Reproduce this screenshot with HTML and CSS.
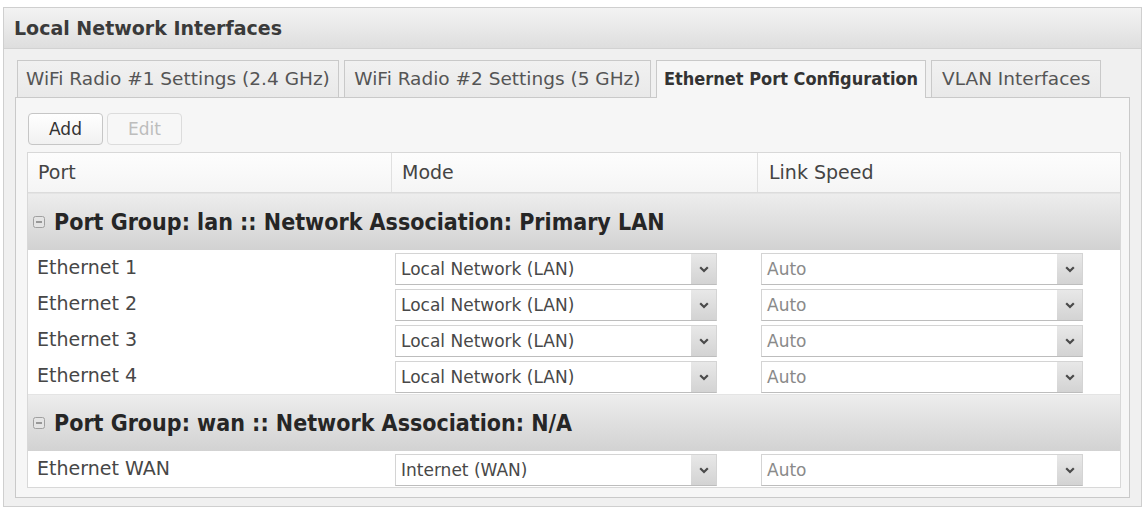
FILE: index.html
```html
<!DOCTYPE html>
<html>
<head>
<meta charset="utf-8">
<link rel="stylesheet" href="styles.css">
</head>
<body>
<div class="panel">
  <div class="panel-title">Local Network Interfaces</div>
  <div class="panel-body">
    <div class="tabs">
      <div class="tab t1">WiFi Radio #1 Settings (2.4 GHz)</div>
      <div class="tab t2">WiFi Radio #2 Settings (5 GHz)</div>
      <div class="tab t3 active">Ethernet Port Configuration</div>
      <div class="tab t4">VLAN Interfaces</div>
    </div>
    <div class="tab-content">
      <div class="toolbar">
        <button class="btn">Add</button>
        <button class="btn disabled">Edit</button>
      </div>
      <div class="grid">
        <div class="grid-head">
          <div class="hcell">Port</div>
          <div class="hcell">Mode</div>
          <div class="hcell last">Link Speed</div>
        </div>

        <div class="group">
          <svg class="collapse" width="12" height="12" viewBox="0 0 12 12"><rect x="0.5" y="0.5" width="11" height="11" rx="2" fill="#e4e4e4" stroke="#a0a0a0"/><path d="M3 6H9" stroke="#777" stroke-width="1.4"/></svg>
          <span>Port Group: lan :: Network Association: Primary LAN</span>
        </div>

        <div class="row">
          <div class="cell name">Ethernet 1</div>
          <div class="cell"><div class="select"><span class="val">Local Network (LAN)</span><span class="arrow"><svg width="10" height="7" viewBox="0 0 10 7"><path d="M1.2 1.2L5 5L8.8 1.2" fill="none" stroke="#4a4a4a" stroke-width="2.2"/></svg></span></div></div>
          <div class="cell"><div class="select"><span class="val light">Auto</span><span class="arrow"><svg width="10" height="7" viewBox="0 0 10 7"><path d="M1.2 1.2L5 5L8.8 1.2" fill="none" stroke="#4a4a4a" stroke-width="2.2"/></svg></span></div></div>
        </div>
        <div class="row">
          <div class="cell name">Ethernet 2</div>
          <div class="cell"><div class="select"><span class="val">Local Network (LAN)</span><span class="arrow"><svg width="10" height="7" viewBox="0 0 10 7"><path d="M1.2 1.2L5 5L8.8 1.2" fill="none" stroke="#4a4a4a" stroke-width="2.2"/></svg></span></div></div>
          <div class="cell"><div class="select"><span class="val light">Auto</span><span class="arrow"><svg width="10" height="7" viewBox="0 0 10 7"><path d="M1.2 1.2L5 5L8.8 1.2" fill="none" stroke="#4a4a4a" stroke-width="2.2"/></svg></span></div></div>
        </div>
        <div class="row">
          <div class="cell name">Ethernet 3</div>
          <div class="cell"><div class="select"><span class="val">Local Network (LAN)</span><span class="arrow"><svg width="10" height="7" viewBox="0 0 10 7"><path d="M1.2 1.2L5 5L8.8 1.2" fill="none" stroke="#4a4a4a" stroke-width="2.2"/></svg></span></div></div>
          <div class="cell"><div class="select"><span class="val light">Auto</span><span class="arrow"><svg width="10" height="7" viewBox="0 0 10 7"><path d="M1.2 1.2L5 5L8.8 1.2" fill="none" stroke="#4a4a4a" stroke-width="2.2"/></svg></span></div></div>
        </div>
        <div class="row">
          <div class="cell name">Ethernet 4</div>
          <div class="cell"><div class="select"><span class="val">Local Network (LAN)</span><span class="arrow"><svg width="10" height="7" viewBox="0 0 10 7"><path d="M1.2 1.2L5 5L8.8 1.2" fill="none" stroke="#4a4a4a" stroke-width="2.2"/></svg></span></div></div>
          <div class="cell"><div class="select"><span class="val light">Auto</span><span class="arrow"><svg width="10" height="7" viewBox="0 0 10 7"><path d="M1.2 1.2L5 5L8.8 1.2" fill="none" stroke="#4a4a4a" stroke-width="2.2"/></svg></span></div></div>
        </div>

        <div class="group">
          <svg class="collapse" width="12" height="12" viewBox="0 0 12 12"><rect x="0.5" y="0.5" width="11" height="11" rx="2" fill="#e4e4e4" stroke="#a0a0a0"/><path d="M3 6H9" stroke="#777" stroke-width="1.4"/></svg>
          <span>Port Group: wan :: Network Association: N/A</span>
        </div>

        <div class="row">
          <div class="cell name">Ethernet WAN</div>
          <div class="cell"><div class="select"><span class="val">Internet (WAN)</span><span class="arrow"><svg width="10" height="7" viewBox="0 0 10 7"><path d="M1.2 1.2L5 5L8.8 1.2" fill="none" stroke="#4a4a4a" stroke-width="2.2"/></svg></span></div></div>
          <div class="cell"><div class="select"><span class="val light">Auto</span><span class="arrow"><svg width="10" height="7" viewBox="0 0 10 7"><path d="M1.2 1.2L5 5L8.8 1.2" fill="none" stroke="#4a4a4a" stroke-width="2.2"/></svg></span></div></div>
        </div>
      </div>
    </div>
  </div>
</div>
</body>
</html>
```

FILE: styles.css
```css
* { box-sizing: border-box; }

body {
  margin: 0;
  background: #ffffff;
  font-family: "DejaVu Sans", "Liberation Sans", sans-serif;
  color: #444;
}

.panel {
  margin: 7px 0 0 3px;
  width: 1139px;
  height: 500px;
  border: 1px solid #cfcfcf;
  background: #f0f0f0;
  display: flex;
  flex-direction: column;
}

.panel-title {
  height: 41px;
  padding-left: 10px;
  line-height: 41px;
  font-size: 19px;
  font-weight: bold;
  color: #3a3a3a;
  background: linear-gradient(#f3f3f3, #dedede);
  border-bottom: 1px solid #d2d2d2;
}

.panel-body {
  flex: 1;
  padding: 11px 11px 8px 11px;
  display: flex;
  flex-direction: column;
}

.tabs {
  display: flex;
  gap: 5px;
  padding-left: 2px;
  height: 37px;
  position: relative;
  z-index: 1;
}

.tab {
  height: 37px;
  border: 1px solid #c9c9c9;
  border-bottom: none;
  background: linear-gradient(#f1f1f1, #e9e9e9);
  padding: 0 8px;
  line-height: 36px;
  font-size: 18.5px;
  color: #555;
  white-space: nowrap;
}

.tab.t2 { padding: 0 9.5px; }
.tab.t4 { padding: 0 10px; }

.tab.active {
  height: 38px;
  background: #f6f6f6;
  font-family: "DejaVu Sans Condensed", "DejaVu Sans", sans-serif;
  font-stretch: condensed;
  font-weight: bold;
  font-size: 18px;
  color: #333;
  padding: 0 7px;
}

.tab-content {
  flex: 1;
  border: 1px solid #c9c9c9;
  background: #f6f6f6;
  padding: 15px 8px 9px 11px;
  display: flex;
  flex-direction: column;
}

.toolbar {
  display: flex;
  gap: 4px;
  margin-left: 1px;
  height: 32px;
}

.btn {
  width: 75px;
  height: 32px;
  border: 1px solid #c6c6c6;
  border-radius: 4px;
  background: linear-gradient(#ffffff, #f1f1f1);
  font-family: "DejaVu Sans", sans-serif;
  font-size: 17px;
  color: #333;
  padding: 0;
}

.btn.disabled {
  color: #bdbdbd;
  border-color: #dcdcdc;
  background: #f7f7f7;
}

.grid {
  margin-top: 7px;
  border: 1px solid #d8d8d8;
  background: #ffffff;
}

.grid-head,
.row {
  display: grid;
  grid-template-columns: 364px 366px 1fr;
}

.grid-head {
  height: 40px;
  background: linear-gradient(#fdfdfd, #f5f5f5);
  border-bottom: 1px solid #dcdcdc;
}

.hcell {
  padding-left: 10px;
  line-height: 39px;
  font-size: 19px;
  color: #444;
  border-right: 1px solid #e0e0e0;
}

.hcell.last { border-right: none; padding-left: 11px; }

.group {
  height: 57px;
  display: flex;
  align-items: center;
  padding-left: 5px;
  background: linear-gradient(#ededed, #d2d2d2);
  border-top: 1px solid #e4e4e4;
}

.collapse {
  flex: none;
  margin-right: 9px;
}

.group span {
  font-family: "DejaVu Sans Condensed", "DejaVu Sans", sans-serif;
  font-stretch: condensed;
  font-weight: bold;
  font-size: 23px;
  color: #262626;
}

.row {
  height: 36px;
  background: #ffffff;
}

.cell {
  padding: 3px 0 0 3px;
}

.cell.name {
  padding: 0 0 0 9px;
  line-height: 34px;
  font-size: 19px;
  color: #474747;
}

.select {
  width: 322px;
  height: 32px;
  display: flex;
  border: 1px solid #d4d4d4;
  border-bottom-color: #bdbdbd;
  background: #ffffff;
}

.val {
  flex: 1;
  padding-left: 5px;
  line-height: 31px;
  font-size: 17px;
  color: #484848;
  white-space: nowrap;
}

.val.light { color: #8a8a8a; }

.arrow {
  width: 25px;
  flex: none;
  display: flex;
  align-items: center;
  justify-content: center;
  background: linear-gradient(#e8e8e8, #d3d3d3);
}
```
